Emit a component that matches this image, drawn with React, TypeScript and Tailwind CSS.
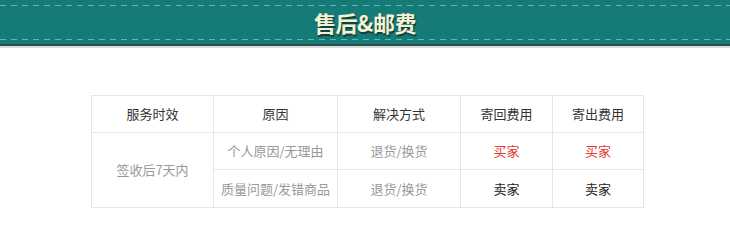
const rows = [
  { reason: "个人原因/无理由", fix: "退货/换货", back: "买家", out: "买家", red: true, h: "h-[37px]" },
  { reason: "质量问题/发错商品", fix: "退货/换货", back: "卖家", out: "卖家", red: false, h: "h-[38px]" },
];

function Dashes() {
  return (
    <div
      className="h-px w-full"
      style={{ backgroundImage: "repeating-linear-gradient(90deg, #5cb7ae 0 6px, transparent 6px 11px)" }}
    />
  );
}

export default function App() {
  const font = { fontFamily: '"Microsoft YaHei", "Noto Sans CJK SC", sans-serif' };
  return (
    <div className="h-[248px] w-[730px] bg-white" style={font}>
      <div className="relative">
        <div className="flex h-[44px] flex-col justify-between bg-[#167a76] pt-[5px] pb-[4px]">
          <Dashes />
          <Dashes />
        </div>
        <div className="h-[2px] bg-[#2f4f4c]" />
        <div className="h-[2px] bg-[#d6dcdb]" />
        <div className="absolute inset-x-0 top-0 flex h-[44px] items-center justify-center">
          <span
            className="text-[22px] font-bold leading-none tracking-[-0.5px] text-[#f6f1d2]"
            style={{ textShadow: "1px 2px 1px #0b3f3c" }}
          >
            售后&amp;邮费
          </span>
        </div>
      </div>

      <div className="pl-[91px] pt-[47px]">
        <table className="w-[552px] table-fixed border-collapse text-center text-[13px]">
          <colgroup>
            <col className="w-[122px]" />
            <col className="w-[124px]" />
            <col className="w-[123px]" />
            <col className="w-[92px]" />
            <col className="w-[91px]" />
          </colgroup>
          <thead>
            <tr className="h-[37px] text-[#333]">
              {["服务时效", "原因", "解决方式", "寄回费用", "寄出费用"].map((h) => (
                <th key={h} className="border border-[#e6e6e6] font-normal">
                  {h}
                </th>
              ))}
            </tr>
          </thead>
          <tbody>
            {rows.map((r, i) => (
              <tr key={i} className={r.h}>
                {i === 0 && (
                  <td rowSpan={2} className="border border-[#e6e6e6] text-[#999]">
                    签收后7天内
                  </td>
                )}
                <td className="border border-[#e6e6e6] text-[#999]">{r.reason}</td>
                <td className="border border-[#e6e6e6] text-[#999]">{r.fix}</td>
                <td className={`border border-[#e6e6e6] ${r.red ? "text-[#e33b2c]" : "text-[#222]"}`}>{r.back}</td>
                <td className={`border border-[#e6e6e6] ${r.red ? "text-[#e33b2c]" : "text-[#222]"}`}>{r.out}</td>
              </tr>
            ))}
          </tbody>
        </table>
      </div>
    </div>
  );
}
